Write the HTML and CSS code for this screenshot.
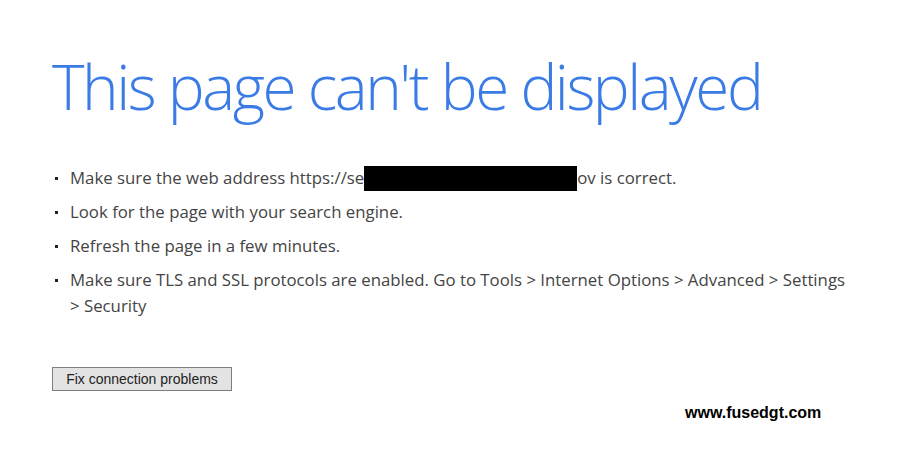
FILE: index.html
```html
<!DOCTYPE html>
<html>
<head>
<meta charset="utf-8">
<link rel="stylesheet" href="styles.css">
</head>
<body>
<main class="page">
  <h1 class="title">This page can't be displayed</h1>
  <ul class="tips">
    <li>Make sure the web address https://se<span class="redact"></span>ov is correct.</li>
    <li>Look for the page with your search engine.</li>
    <li>Refresh the page in a few minutes.</li>
    <li>Make sure TLS and SSL protocols are enabled. Go to Tools &gt; Internet Options &gt; Advanced &gt; Settings &gt;&nbsp;Security</li>
  </ul>
  <button class="fix" type="button">Fix connection problems</button>
  <div class="credit">www.fusedgt.com</div>
</main>
</body>
</html>
```
FILE: styles.css
```css
html, body {
  margin: 0;
  padding: 0;
  background: #ffffff;
}
.page {
  width: 920px;
  height: 454px;
  box-sizing: border-box;
  padding: 50px 0 0 52px;
  display: flex;
  flex-direction: column;
  align-items: flex-start;
}
.title {
  margin: 0;
  font-family: "Open Sans", "Noto Sans", sans-serif;
  font-weight: 300;
  font-size: 62px;
  line-height: 72px;
  color: #3a7be6;
  letter-spacing: -2.45px;
}
.tips {
  margin: 43px 0 0 0;
  padding: 0 0 0 18px;
  width: 830px;
  list-style: none;
  font-family: "Open Sans", "Noto Sans", sans-serif;
  font-size: 16.8px;
  line-height: 26px;
  color: #444444;
}
.tips li {
  position: relative;
  margin-bottom: 8px;
}
.tips li::before {
  content: "";
  position: absolute;
  left: -15px;
  top: 12px;
  width: 3px;
  height: 3px;
  background: #222;
}
.redact {
  display: inline-block;
  width: 213px;
  height: 25px;
  background: #000;
  vertical-align: -7px;
}
.fix {
  margin-top: 40px;
  width: 180px;
  height: 24px;
  padding: 0;
  border: 1px solid #7e7e7e;
  background: #e3e3e3;
  font-family: "Liberation Sans", Arial, sans-serif;
  font-size: 14px;
  color: #222;
}
.credit {
  margin: 13px 0 0 633px;
  font-family: "Liberation Sans", Arial, sans-serif;
  font-weight: bold;
  font-size: 16px;
  color: #000;
}
```
